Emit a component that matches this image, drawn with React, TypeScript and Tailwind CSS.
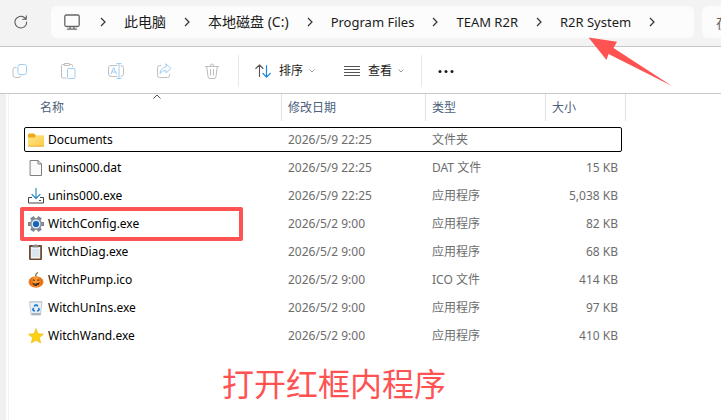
import { Fragment, type ReactNode } from "react";

const latin = "font-['Noto_Sans','Noto_Sans_CJK_SC',sans-serif]";

function Svg({ children, className = "size-4" }: { children: ReactNode; className?: string }) {
  return (
    <svg viewBox="0 0 16 16" className={`${className} shrink-0`} fill="none" strokeLinecap="round" strokeLinejoin="round" aria-hidden="true">
      {children}
    </svg>
  );
}

function Chevron() {
  return (
    <svg viewBox="0 0 6 10" className="h-2.5 w-1.5 shrink-0" fill="none" stroke="#333" strokeWidth="1.2" aria-hidden="true">
      <path d="M1 1l4 4-4 4" />
    </svg>
  );
}

function SmallDown() {
  return (
    <svg viewBox="0 0 6 4" className="h-1 w-1.5 shrink-0" fill="none" stroke="#999" aria-hidden="true">
      <path d="M.5.5L3 3 5.500.5" />
    </svg>
  );
}

const tools: { label: string; icon: ReactNode }[] = [
  {
    label: "复制",
    icon: (
      <>
        <path d="M4 4.500H3Q1 4.500 1 6.500V12Q1 14.500 3.500 14.500H6Q8.500 14.500 9 13" stroke="#c0c0c0" />
        <rect x="6" y="1.500" width="8.500" height="10" rx="2" stroke="#9fcdf3" />
      </>
    ),
  },
  {
    label: "粘贴",
    icon: (
      <>
        <path d="M6 15H2.500Q1.500 15 1.500 14V2.500Q1.500 1.500 2.500 1.500H4.500M9.500 1.500H11.500Q12.500 1.500 12.500 2.500V3.500M4.500.5h5v2h-5z" stroke="#c0c0c0" />
        <rect x="7.500" y="5.500" width="7.500" height="10" rx="1" stroke="#9fcdf3" />
      </>
    ),
  },
  {
    label: "重命名",
    icon: (
      <>
        <path d="M9 2.500H3Q.5 2.500.5 5v6Q.5 13.500 3 13.500H9M13 2.500Q15.500 2.500 15.500 5v6Q15.500 13.500 13 13.500" stroke="#c0c0c0" />
        <path d="M3 11l2.700-6.500L8.400 11M4 9h3.500M9 .5h4M9 15.500h4M11 .5v15" stroke="#9fcdf3" />
      </>
    ),
  },
  {
    label: "共享",
    icon: (
      <>
        <path d="M5 2.500H3.500Q1.500 2.500 1.500 4.500v8Q1.500 14.500 3.500 14.500h8Q13.500 14.500 13.500 12.500v-1" stroke="#c0c0c0" />
        <path d="M10 1l5 4.500-5 4.500V7.500Q6 7.500 4 10.500 4.500 4.500 10 3.800z" stroke="#9fcdf3" />
      </>
    ),
  },
  {
    label: "删除",
    icon: <path d="M1.500 3.500h13M6 3.300Q6 1 8 1t2 2.300M2.700 3.500l1.300 10Q4.200 15.500 6 15.500h4Q11.800 15.500 12 13.500l1.300-10M6.500 6.500v5.500M9.500 6.500v5.500" stroke="#bdbdbd" />,
  },
];

const icons = {
  folder: (
    <Svg>
      <path d="M0 3Q0 1.500 1.500 1.500h4.500l2 2v4H0z" fill="#eda916" />
      <path d="M0 5.500h6.500l2-2.200h6Q16 3.300 16 4.500v8.500Q16 14.500 14.500 14.500h-13Q0 14.500 0 13z" fill="url(#folderFront)" />
      <path d="M.5 14.200h15" stroke="#e9a72b" strokeWidth=".8" />
      <defs>
        <linearGradient id="folderFront" x1="0" y1="0" x2="1" y2="1">
          <stop stopColor="#ffe68c" />
          <stop offset="1" stopColor="#fbc944" />
        </linearGradient>
      </defs>
    </Svg>
  ),
  file: (
    <Svg>
      <path d="M2.500.5h7.500l3.500 3.500v11.500h-11z" fill="#fafafa" stroke="#808080" strokeLinejoin="miter" />
      <path d="M10 .5V4h3.500" stroke="#808080" />
    </Svg>
  ),
  installer: (
    <Svg>
      <path d="M4 9.500H.5v5.500h15v-5.500H12M11 12.500h2" stroke="#444" strokeLinecap="butt" strokeLinejoin="miter" />
      <path d="M8 .5V10M4 6.500l4 4 4-4" stroke="#2d8cc4" strokeWidth="1.200" />
    </Svg>
  ),
  gear: (
    <Svg>
      <g stroke="#7d8791" strokeWidth="4.200" strokeLinecap="butt">
        <path d="M0 8h16M4 1.100l8 13.800M12 1.100L4 14.900" />
      </g>
      <circle cx="8" cy="8" r="5.900" fill="#858f99" />
      <circle cx="8" cy="8" r="4.500" fill="#dce8f3" />
      <circle cx="8" cy="8" r="3.100" fill="#1763b6" />
    </Svg>
  ),
  clipboard: (
    <Svg>
      <rect x="1" y="1" width="13" height="15" rx="1" fill="#6f4a35" />
      <path d="M2.800 3h9.400v11.500H2.800z" fill="#f3f8fc" />
      <path d="M4 6h7M4 8h7M4 10h7M4 12h7" stroke="#b5c9d8" strokeWidth=".8" />
      <path d="M4.500 3.500V1.500L6 1.200Q7.500-.8 9 1.200l1.500.3v2z" fill="#8b8f94" />
    </Svg>
  ),
  pumpkin: (
    <Svg>
      <path d="M8 5Q7 2.500 9.500.8" stroke="#6c7b43" strokeWidth="1.300" />
      <ellipse cx="8" cy="10" rx="7.500" ry="5.700" fill="#ee7b1c" />
      <ellipse cx="8" cy="9.500" rx="3.500" ry="5.200" fill="#fa9a32" />
      <path d="M3.500 6Q1.500 9 3 13M12.500 6q2 3 .5 7" stroke="#d65f12" strokeWidth=".6" />
      <path d="M4.500 8.500l1.500-1.500L7 8.800zM9 8.800l1-1.800 1.500 1.500zM4.300 10.300Q6 12 8 11.500t3.700-1.200Q11 14 8 14T4.300 10.300z" fill="#472013" />
      <path d="M6.500 11.400h1.200v1H6.500zM9 13h1v1H9z" fill="#fa9a32" />
    </Svg>
  ),
  recycle: (
    <Svg>
      <path d="M2 1.500h12L12.500 15H3.500z" fill="#e9eff4" stroke="#b5bec6" strokeWidth=".8" />
      <path d="M3.500 13h9.200l-.3 2H3.800z" fill="#aab4bd" />
      <path d="M2 1.500h12v1.300H2z" fill="#cbd3d9" />
      <path d="M6.300 6.500L7.300 5h1.500l1 1.500M10.500 8l.7 1.500-.8 1.200H9M7 10.700H5.500l-.7-1.200L5.700 8" stroke="#1677d2" strokeWidth="1.500" strokeLinecap="butt" />
    </Svg>
  ),
  star: (
    <Svg>
      <path d="M8 .8l2.100 4.900 5.400.5-4.100 3.500 1.300 5.300L8 12.200 3.300 15l1.300-5.300L.5 6.200l5.400-.5z" fill="#fdd013" stroke="#f0bd19" strokeWidth=".7" />
    </Svg>
  ),
};

const files: { name: string; icon: keyof typeof icons; date: string; type: string; size: string }[] = [
  { name: "Documents", icon: "folder", date: "2026/5/9 22:25", type: "文件夹", size: "" },
  { name: "unins000.dat", icon: "file", date: "2026/5/9 22:25", type: "DAT 文件", size: "15 KB" },
  { name: "unins000.exe", icon: "installer", date: "2026/5/9 22:25", type: "应用程序", size: "5,038 KB" },
  { name: "WitchConfig.exe", icon: "gear", date: "2026/5/2 9:00", type: "应用程序", size: "82 KB" },
  { name: "WitchDiag.exe", icon: "clipboard", date: "2026/5/2 9:00", type: "应用程序", size: "68 KB" },
  { name: "WitchPump.ico", icon: "pumpkin", date: "2026/5/2 9:00", type: "ICO 文件", size: "414 KB" },
  { name: "WitchUnIns.exe", icon: "recycle", date: "2026/5/2 9:00", type: "应用程序", size: "97 KB" },
  { name: "WitchWand.exe", icon: "star", date: "2026/5/2 9:00", type: "应用程序", size: "410 KB" },
];

const crumbs = [
  { name: "此电脑", size: "text-sm" },
  { name: "本地磁盘 (C:)", size: "text-sm" },
  { name: "Program Files", size: "text-[13px]" },
  { name: "TEAM R2R", size: "text-[13px]" },
  { name: "R2R System", size: "text-[13px]" },
];

function AddressBar() {
  return (
    <header className="flex h-[47px] border-b border-[#c8c8c8] bg-[#f3f3f3] pt-1.5">
      <button aria-label="刷新" className="flex h-8 w-[51px] shrink-0 items-center pl-3.5">
        <Svg className="size-3.5">
          <path d="M14.500 8A6.700 6.700 0 1 1 12 2.900L14 4.800M14 .8v4H10" stroke="#555" strokeWidth="1.200" />
        </Svg>
      </button>
      <nav aria-label="路径" className="flex h-8 min-w-0 flex-1 items-center gap-[18px] rounded-md bg-[#fcfcfc] pl-[13px]">
        <button aria-label="此电脑" className="mr-0.5">
          <Svg>
            <rect x=".8" y="1" width="14.400" height="11.500" rx="1.500" stroke="#666" strokeWidth="1.300" />
            <path d="M6 13v2M10 13v2M3.500 15.200h9" stroke="#666" strokeWidth="1.200" />
          </Svg>
        </button>
        <Chevron />
        {crumbs.map((crumb) => (
          <Fragment key={crumb.name}>
            <a href="#" className={`${crumb.size} shrink-0 leading-5 whitespace-nowrap text-[#1b1b1b]`}>{crumb.name}</a>
            <Chevron />
          </Fragment>
        ))}
      </nav>
      <div className="ml-2 h-8 w-[19px] shrink-0 overflow-hidden rounded-l-md bg-[#fcfcfc]">
        <input aria-label="搜索" placeholder="在 R2R System 中搜索" className="h-8 w-52 bg-transparent pl-3.5 text-sm outline-none placeholder:text-[#666]" />
      </div>
    </header>
  );
}

function Toolbar() {
  return (
    <div role="toolbar" aria-label="工具" className="flex h-[47px] items-center border-b border-[#c8c8c8] bg-white pt-0.5 text-xs text-[#1b1b1b]">
      <div className="flex gap-8 pr-[18px] pl-3">
        {tools.map((tool) => (
          <button key={tool.label} aria-label={tool.label} disabled>
            <Svg>{tool.icon}</Svg>
          </button>
        ))}
      </div>
      <div className="h-8 w-px bg-[#e9e9e9]" />
      <button className="ml-4 flex items-center">
        <Svg>
          <path d="M4.500 13.500V2M.8 5.500L4.500 1.800 8 5.500" stroke="#555" strokeWidth="1.100" />
          <path d="M11.500 2.500V14M8 10.500l3.500 3.600 3.700-3.600" stroke="#1a86d9" strokeWidth="1.200" />
        </Svg>
        <span className="mr-1.5 ml-2">排序</span>
        <SmallDown />
      </button>
      <button className="ml-[29px] flex items-center">
        <Svg>
          <path d="M0 3.500h16M0 6.500h16M0 9.500h16M0 12.500h16" stroke="#555" strokeLinecap="butt" />
        </Svg>
        <span className="mr-1.5 ml-2">查看</span>
        <SmallDown />
      </button>
      <div className="ml-[17px] h-8 w-px bg-[#e9e9e9]" />
      <button aria-label="更多" className="ml-4">
        <Svg>
          <g fill="#1b1b1b">
            <circle cx="2" cy="8.500" r="1.500" />
            <circle cx="8" cy="8.500" r="1.500" />
            <circle cx="14" cy="8.500" r="1.500" />
          </g>
        </Svg>
      </button>
    </div>
  );
}

function FileTable() {
  const head = "h-[30px] p-0 align-top text-left font-normal";
  const label = "flex h-[27px] items-center border-r border-[#e2e2e2]";
  return (
    <table className="-mt-[3px] w-[598px] table-fixed border-separate border-spacing-x-0 border-spacing-y-[3px] text-xs">
      <colgroup>
        <col className="w-[258px]" />
        <col className="w-36" />
        <col className="w-[120px]" />
        <col className="w-[76px]" />
      </colgroup>
      <thead className="text-[#4c607a]">
        <tr>
          <th className={head} aria-sort="ascending">
            <div className={`${label} relative pl-4`}>
              名称
              <svg viewBox="0 0 8 5" className="absolute top-0 left-[129px] h-[5px] w-2" fill="none" stroke="#555" aria-hidden="true">
                <path d="M.5 4.500L4 1l3.500 3.500" />
              </svg>
            </div>
          </th>
          <th className={head}><div className={`${label} pl-1.5`}>修改日期</div></th>
          <th className={head}><div className={`${label} pl-1.5`}>类型</div></th>
          <th className={head}><div className={`${label} -mr-1 pl-1.5`}>大小</div></th>
        </tr>
      </thead>
      <tbody className="text-[#6d6d6d]">
        {files.map((file, i) => (
          <tr key={file.name} className={i === 0 ? "rounded-xs outline-1 -outline-offset-1 outline-black" : ""}>
            <td className="h-[25px] p-0">
              <div className="flex items-center gap-1 pl-1">
                {icons[file.icon]}
                <span className="text-black">{file.name}</span>
              </div>
            </td>
            <td className="p-0 pl-1.5">{file.date}</td>
            <td className="p-0 pl-1.5">{file.type}</td>
            <td className="p-0 pr-1 text-right">{file.size}</td>
          </tr>
        ))}
      </tbody>
    </table>
  );
}

export default function App() {
  return (
    <div className={`relative flex min-h-screen flex-col overflow-hidden bg-white ${latin}`}>
      <AddressBar />
      <Toolbar />
      <main className="flex flex-1">
        <div className="w-1.5 shrink-0 bg-[#f0f0f0]" />
        <div className="ml-0.5 min-w-0 flex-1 border-l border-[#f2f2f2] pl-[15px]">
          <FileTable />
        </div>
      </main>
      <div className="absolute top-[207px] left-5 h-[34px] w-[223px] rounded-xs border-4 border-[#ff5252]" />
      <svg viewBox="0 0 84 50" className="absolute top-[37px] left-[588px] h-[50px] w-[84px]" aria-hidden="true">
        <path d="M.5.5L29 4.800 25.500 11 84 49 20.500 17 18.500 23z" fill="#ff5252" />
      </svg>
      <p className="absolute top-[364px] left-[222px] text-[32px] leading-10 whitespace-nowrap text-[#ff5252]">打开红框内程序</p>
    </div>
  );
}
